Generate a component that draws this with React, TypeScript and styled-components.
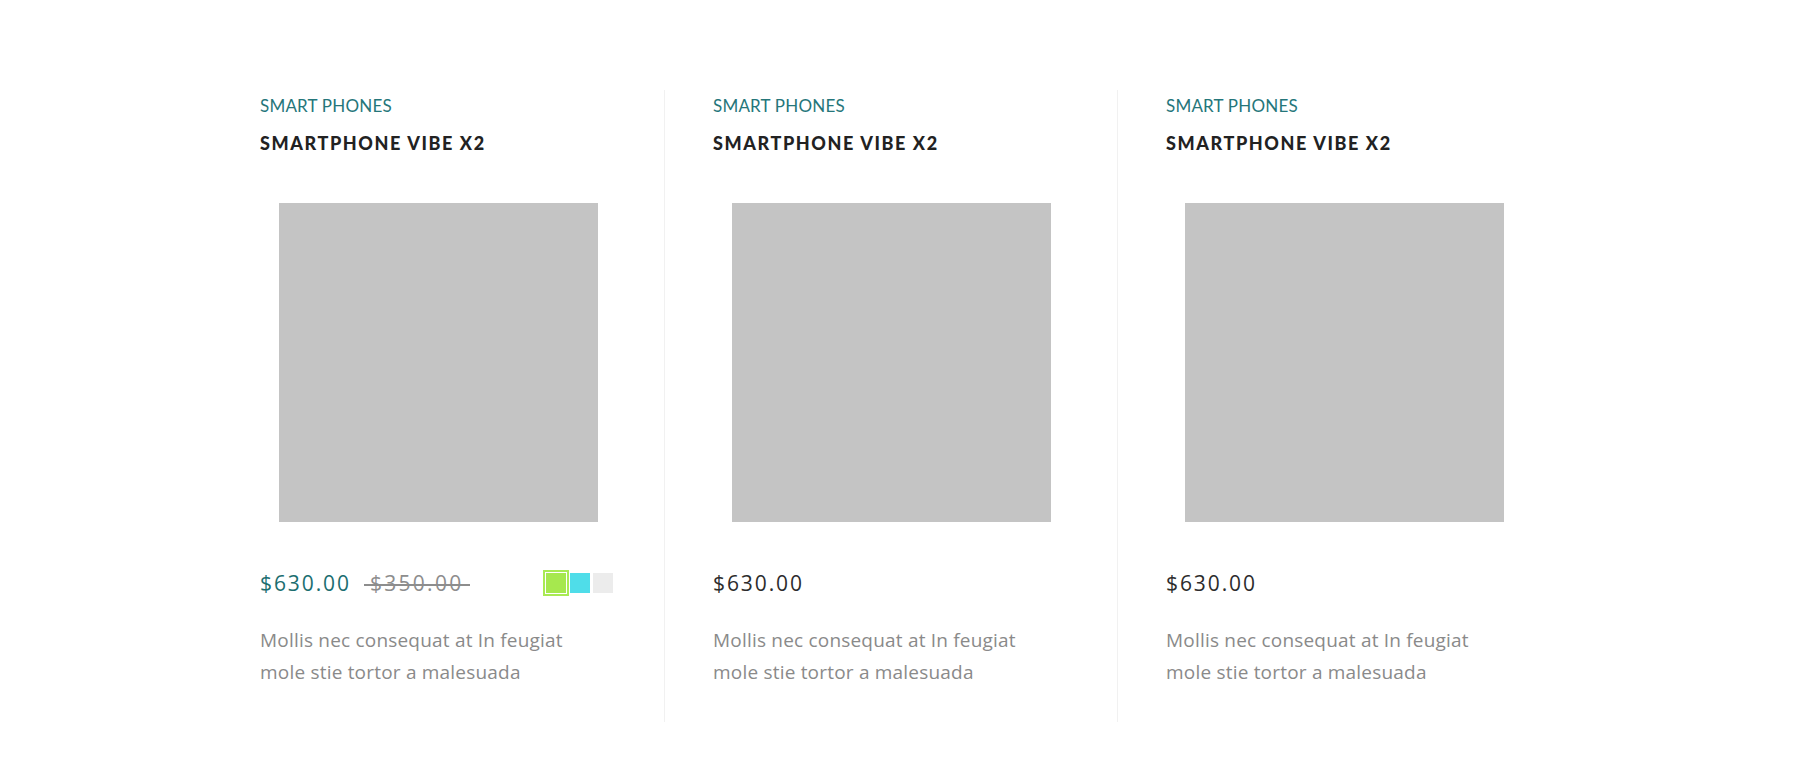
import React from "react";
import styled, { createGlobalStyle } from "styled-components";

const GlobalStyle = createGlobalStyle`
  html, body { margin: 0; padding: 0; background: #ffffff; }
  body { font-family: "Open Sans", "Liberation Sans", sans-serif; }
`;

const Section = styled.section`
  padding: 90px 0 0 211px;
  display: grid;
  grid-template-columns: repeat(3, 453px);
`;

const Column = styled.article<{ $divider?: boolean }>`
  box-sizing: border-box;
  height: 632px;
  padding: 6px 48px 0;
  border-left: 1px solid ${(p) => (p.$divider ? "#f1f1f1" : "transparent")};
  display: flex;
  flex-direction: column;
`;

const Category = styled.div`
  font-family: "Lato", "Liberation Sans", sans-serif;
  font-size: 17px;
  line-height: 20px;
  letter-spacing: 0.2px;
  color: #25767a;
  text-transform: uppercase;
`;

const Title = styled.h3`
  margin: 16px 0 0;
  font-family: "Lato", "Liberation Sans", sans-serif;
  font-weight: 900;
  font-size: 18px;
  line-height: 22px;
  letter-spacing: 1.6px;
  color: #222222;
  text-transform: uppercase;
`;

const ImageBox = styled.div`
  margin: 49px 0 0 19px;
  width: 319px;
  height: 319px;
  background: #c4c4c4;
`;

const PriceRow = styled.div`
  margin-top: 49px;
  height: 24px;
  display: flex;
  align-items: center;
  width: 353px;
`;

const Price = styled.span<{ $accent?: boolean }>`
  font-family: "Open Sans", "Liberation Sans", sans-serif;
  font-size: 21px;
  letter-spacing: 1.9px;
  color: ${(p) => (p.$accent ? "#1b6e70" : "#2c2c2c")};
`;

const OldPrice = styled.span`
  position: relative;
  margin-left: 13px;
  padding: 0 6px;
  font-family: "Open Sans", "Liberation Sans", sans-serif;
  font-size: 21px;
  letter-spacing: 2.3px;
  color: #8d8d8d;

  &::after {
    content: "";
    position: absolute;
    left: 0;
    right: 0;
    top: 54%;
    height: 1.5px;
    background: #8d8d8d;
  }
`;

const Swatches = styled.div`
  margin-left: auto;
  display: flex;
  gap: 3px;
`;

const Swatch = styled.span<{ $color: string; $active?: boolean }>`
  width: 20px;
  height: 20px;
  background: ${(p) => p.$color};
  box-shadow: ${(p) =>
    p.$active ? "0 0 0 1px #ffffff, 0 0 0 3px #a9ea53" : "none"};
  margin-left: ${(p) => (p.$active ? "3px" : "0")};
  margin-right: ${(p) => (p.$active ? "1px" : "0")};
`;

const Description = styled.p`
  margin: 29px 0 0;
  max-width: 330px;
  font-family: "Open Sans", "Liberation Sans", sans-serif;
  font-size: 19px;
  line-height: 32px;
  letter-spacing: 0.2px;
  color: #8a8a8a;
`;

type Product = {
  onSale?: boolean;
};

const products: Product[] = [{ onSale: true }, {}, {}];

export default function App() {
  return (
    <>
      <GlobalStyle />
      <Section>
        {products.map((p, i) => (
          <Column key={i} $divider={i > 0}>
            <Category>Smart Phones</Category>
            <Title>Smartphone Vibe X2</Title>
            <ImageBox />
            <PriceRow>
              <Price $accent={p.onSale}>$630.00</Price>
              {p.onSale && (
                <>
                  <OldPrice>$350.00</OldPrice>
                  <Swatches>
                    <Swatch $color="#a6e84e" $active />
                    <Swatch $color="#4fdde9" />
                    <Swatch $color="#ececec" />
                  </Swatches>
                </>
              )}
            </PriceRow>
            <Description>
              Mollis nec consequat at In feugiat mole stie tortor a malesuada
            </Description>
          </Column>
        ))}
      </Section>
    </>
  );
}
